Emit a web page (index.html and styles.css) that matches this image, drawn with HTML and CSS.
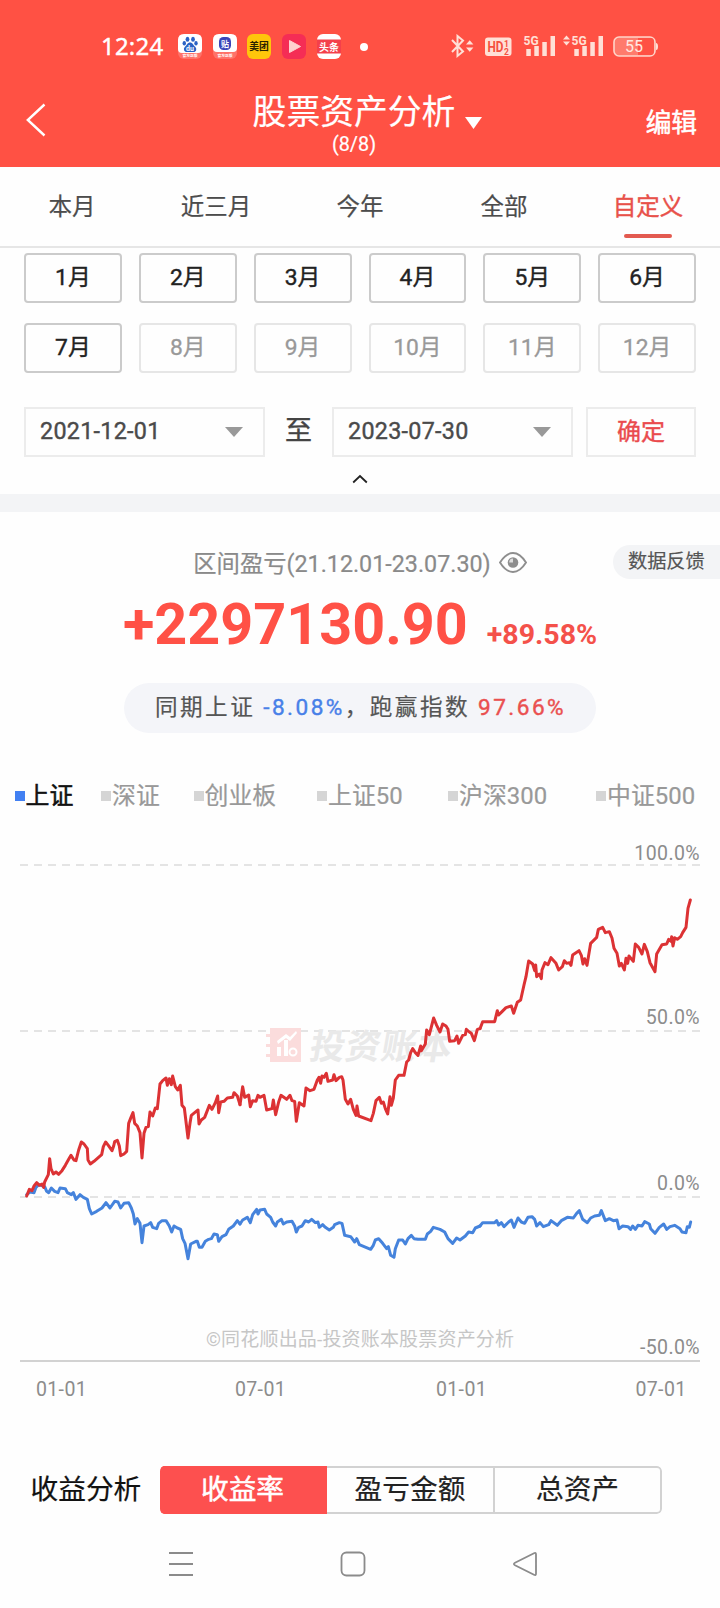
FILE: index.html
```html
<!DOCTYPE html>
<html lang="zh-CN">
<head>
<meta charset="utf-8">
<title>股票资产分析</title>
<link rel="stylesheet" href="styles.css">
</head>
<body>
<header class="top">
  <div class="status">
    <span class="clock">12:24</span>
    <div class="apps">
      <svg width="24" height="25" viewBox="0 0 24 25"><rect width="24" height="25" rx="6" fill="#ff7268"/><path d="M0 6Q0 0 6 0H18Q24 0 24 6V15Q24 19 20 19H4Q0 19 0 15Z" fill="#fff"/><g fill="#2b62c4"><ellipse cx="9.500" cy="5.300" rx="1.900" ry="2.500"/><ellipse cx="15" cy="5.300" rx="1.900" ry="2.500"/><ellipse cx="6.300" cy="9.300" rx="1.700" ry="2.200"/><ellipse cx="18" cy="9.300" rx="1.700" ry="2.200"/><path d="M12 8.500C9.500 8.500 9 11 7.200 12.500C4.500 15 6.500 18.500 9.500 18H15C18 18.500 19.500 15 17 12.500C15 11 14.700 8.500 12 8.500Z"/></g><text x="12" y="17" class="app-du">du</text><text x="12" y="23.300" class="app-cap">官方正版</text></svg>
      <svg width="24" height="25" viewBox="0 0 24 25"><rect width="24" height="25" rx="6" fill="#ff7268"/><path d="M0 6Q0 0 6 0H18Q24 0 24 6V14Q24 18 20 18H4Q0 18 0 14Z" fill="#fff"/><rect x="6" y="3" width="12" height="13" rx="4.500" fill="#3b45b8"/><text x="12" y="12.500" class="app-tie">贴</text><text x="12" y="23" class="app-cap">官方正版</text></svg>
      <svg width="24" height="25" viewBox="0 0 24 25"><rect width="24" height="25" rx="6" fill="#ffc60b"/><text x="12" y="16.300" class="app-mt">美团</text></svg>
      <svg width="24" height="25" viewBox="0 0 24 25"><rect width="24" height="25" rx="6" fill="#f52d55"/><path d="M7.500 6.500V18.500L18.500 12.500Z" fill="#ffd0d0" stroke="#ffd0d0" stroke-linejoin="round"/></svg>
      <svg width="24" height="25" viewBox="0 0 24 25"><rect width="24" height="25" rx="6" fill="#fff"/><rect y="5.500" width="24" height="14" fill="#f4404b"/><text x="12" y="16.500" class="app-tt">头条</text></svg>
    </div>
    <i class="more-dot"></i>
    <svg class="signals" width="210" height="26" viewBox="450 34 210 26">
      <g fill="none" stroke="#ffe0d6" stroke-width="2"><path d="M452 40L463 51.500L457.500 56V36L463 40.500L452 52"/></g>
      <g fill="#ffe0d6"><path d="M466 44.500L469.700 40.300L473.400 44.500ZM466 47.500L469.700 51.700L473.400 47.500Z"/><rect x="485" y="37.500" width="26.500" height="18.500" rx="3"/>
      <path d="M526.300 49h4.500v7h-4.500zM534.300 46h4.500v10h-4.500zM542.300 42h4.500v14h-4.500zM550.500 36h4.500v20h-4.500zM574.300 49h4.500v7h-4.500zM582.300 46h4.500v10h-4.500zM590.300 42h4.500v14h-4.500zM598.500 36h4.500v20h-4.500z"/>
      <path d="M563 39.500L566.500 35.500L570 39.500ZM563 41.500L566.500 45.500L570 41.500Z"/><path d="M656 43q2 0 2 3.500t-2 3.500z"/></g>
      <text x="487.500" y="52" class="hd" textLength="16" lengthAdjust="spacingAndGlyphs">HD</text><text x="504" y="46.500" class="hd-n">1</text><text x="504" y="54.500" class="hd-n">2</text>
      <text x="523.500" y="45" class="five-g">5G</text><text x="571.500" y="45" class="five-g">5G</text>
      <rect x="614" y="37" width="41" height="19" rx="5" fill="#ff7b6c" stroke="#ffd5c9" stroke-width="1.600"/><path d="M638 38h13q3 0 3 4v9q0 4-3 4h-13z" fill="#ff5144"/>
      <text x="634" y="52" class="battery">55</text>
    </svg>
  </div>
  <div class="titlebar">
    <svg class="back" width="22" height="34" viewBox="0 0 22 34"><path d="M18.500 1.500L1.800 17L18.500 32.500" fill="none" stroke="#fff" stroke-width="2.400"/></svg>
    <div class="heading">
      <h1>股票资产分析<svg class="caret" width="17" height="12" viewBox="0 0 17 12"><path d="M0 0H17L8.500 12Z" fill="#fff"/></svg></h1>
      <p>(8/8)</p>
    </div>
    <span class="edit">编辑</span>
  </div>
</header>

<nav class="tabs"><span>本月</span><span>近三月</span><span>今年</span><span>全部</span><span class="active">自定义</span></nav>

<section class="filter">
  <div class="months">
    <span>1月</span><span>2月</span><span>3月</span><span>4月</span><span>5月</span><span>6月</span>
    <span>7月</span><span class="off">8月</span><span class="off">9月</span><span class="off">10月</span><span class="off">11月</span><span class="off">12月</span>
  </div>
  <div class="range">
    <div class="date">2021-12-01<i></i></div>
    <span class="to">至</span>
    <div class="date">2023-07-30<i></i></div>
    <span class="ok">确定</span>
  </div>
  <svg class="fold" width="16" height="10" viewBox="0 0 16 10"><path d="M1.200 8.500L8 2L14.800 8.500" fill="none" stroke="#222" stroke-width="1.800"/></svg>
</section>

<section class="summary">
  <span class="feedback">数据反馈</span>
  <div class="period">区间盈亏(21.12.01-23.07.30)
    <svg width="28" height="21" viewBox="0 0 28 21"><path d="M1 10.500Q7 1 14 1T27 10.500Q21 20 14 20T1 10.500Z" fill="none" stroke="#8e8e8e" stroke-width="1.900"/><circle cx="14" cy="10.500" r="5.300" fill="#8e8e8e"/><path d="M14 10.500V6.500A4 4 0 0 0 10.200 10.500Z" fill="#ddd"/></svg>
  </div>
  <div class="profit"><b>+2297130.90</b><strong>+89.58%</strong></div>
  <div class="compare"><span>同期上证 <em class="down">-8.08%</em>，跑赢指数 <em class="up">97.66%</em></span></div>
</section>

<section class="chart-area">
  <div class="legend"><span class="on">上证</span><span>深证</span><span>创业板</span><span>上证50</span><span>沪深300</span><span>中证500</span></div>
  <svg class="chart" width="720" height="590" viewBox="0 830 720 590">
    <g stroke="#e4e4e4" stroke-width="2" stroke-dasharray="8 6"><path d="M20 865H700M20 1031H700M20 1197H700"/></g>
    <path d="M20 1361H700" stroke="#d2d2d2" stroke-width="2"/>
    <g fill="#fbdcdc"><path d="M270 1028H301V1062H270V1057H266V1054H270V1047H266V1044H270V1037H266V1034H270Z"/></g>
    <g fill="#fff"><path d="M277 1047h4v9h-4zM284 1040h4v16h-4zM277 1041L286 1034L290 1037L296 1031L297 1033L290 1041L286 1038L278 1044Z"/></g><circle cx="293" cy="1052" r="3.500" fill="none" stroke="#fff" stroke-width="2"/>
    <text x="308" y="1059.500" class="watermark" textLength="142" transform="translate(187 0) skewX(-10)">投资账本</text>
    <g transform="translate(0 980) scale(.33333)" class="line blue">
      <polyline points="80,644 90,636 102,638 108,622 116,614 134,620 140,634 146,638 154,624 164,634 174,638 180,624 196,626 202,638 214,644 220,638 228,658 240,644 250,652 262,658 268,686 275,702 290,694 306,684 318,668 330,684 344,664 354,666 362,684 372,670 386,668 394,684 400,702 405,732 412,716 420,730 426,788 432,738 444,734 452,728 458,742 470,746 476,730 486,722 498,722 508,738 515,756 522,738 532,744 542,748 548,776 555,790 564,836 572,792 588,784 592,784 598,802 606,802 616,784 626,778 634,776 642,762 652,764 656,784 666,770 678,764 686,748 700,738 712,722 720,732"/>
      <polyline transform="translate(720 0)" points="0,732 8,720 22,712 31,728 38,704 50,688 54,702 60,690 74,688 80,702 92,712 98,726 107,738 112,726 124,718 130,732 140,726 156,724 164,738 169,756 176,742 186,738 196,722 206,726 215,718 226,728 234,726 238,742 248,734 256,742 268,750 280,742 284,734 298,728 306,730 314,766 332,770 344,786 350,776 358,794 392,808 400,796 406,780 416,776 428,790 440,806 445,800 452,826 462,832 466,806 476,780 488,780 496,792 504,776 514,766 522,776 534,778 556,778 562,762 572,754 580,742 600,748 614,756 624,776 638,790 650,774 660,780 676,768 686,756 698,758 706,744 720,738"/>
      <polyline transform="translate(1440 -420)" points="0,1158 8,1148 44,1148 50,1142 56,1155 64,1148 72,1160 86,1146 94,1140 102,1162 114,1134 124,1146 134,1150 144,1132 156,1130 164,1138 170,1158 180,1148 190,1160 206,1154 213,1142 232,1156 244,1142 262,1132 280,1134 290,1120 298,1112 308,1138 322,1148 332,1134 344,1128 358,1126 364,1112 376,1142 388,1136 400,1142 411,1140 417,1166 428,1158 444,1160 452,1168 458,1158 466,1168 474,1156 486,1158 494,1145 508,1152 512,1166 525,1180 538,1162 551,1152 560,1168 570,1160 584,1156 600,1166 606,1176 618,1178 622,1160 628,1162 632,1146"/>
    </g>
    <g transform="translate(0 980) scale(.33333)" class="line red">
      <polyline points="80,648 88,628 96,632 102,618 110,608 118,616 126,612 131,622 134,606 145,584 149,536 153,566 160,582 168,576 176,583 186,572 196,556 206,538 213,526 222,540 228,542 236,510 244,486 252,492 262,506 264,540 271,552 282,544 305,524 310,500 317,486 325,496 336,512 341,498 344,485 352,481 358,498 362,527 372,522 380,514 386,430 393,412 399,398 404,430 412,438 420,458 426,534 432,460 438,442 445,440 450,396 458,408 466,384 472,386 480,312 488,302 498,294 502,316 508,296 514,314 518,288 526,320 533,330 541,316 546,376 553,384 564,474 570,430 574,406 584,398 594,390 597,432 604,420 614,412 628,376 636,388 646,368 653,348 656,398 662,366 672,364 682,354 698,352 702,338 712,348 720,374"/>
      <polyline transform="translate(720 0)" points="0,374 8,320 14,352 26,345 31,380 38,362 48,364 54,346 60,352 72,346 80,390 96,386 100,360 107,404 116,366 123,346 140,358 150,346 156,362 164,364 169,424 178,368 192,378 198,324 210,332 222,328 232,300 237,292 242,310 246,288 252,292 259,280 264,304 278,300 282,284 288,302 298,292 305,290 309,300 316,358 324,372 332,358 340,388 348,406 351,378 356,408 393,422 400,400 408,362 418,352 424,370 430,366 436,386 443,402 450,350 454,376 460,354 466,300 476,286 492,286 500,246 506,240 512,218 518,206 526,218 534,226 542,198 544,212 556,192 560,150 568,164 581,114 590,136 600,156 608,132 618,138 624,148 629,184 644,182 651,168 656,190 668,166 676,164 679,148 688,156 694,160 703,182 712,148 720,146"/>
      <polyline transform="translate(1440 -420)" points="0,566 8,545 44,545 52,512 56,525 66,515 78,503 94,498 101,520 112,487 122,480 132,435 138,410 146,363 158,372 164,392 167,375 170,410 178,402 184,416 186,390 195,368 204,374 213,353 228,370 236,390 247,380 253,362 260,370 268,368 273,376 278,345 288,338 297,332 304,346 309,372 314,356 321,376 332,310 350,292 355,268 368,262 376,278 388,275 396,294 402,325 411,340 418,378 424,370 433,390 438,355 443,370 447,348 460,364 466,312 476,322 486,342 493,313 502,335 510,368 525,395 530,342 546,314 560,312 566,298 573,304 575,290 579,318 584,293 592,298 602,290 608,278 618,262 624,205 631,180"/>
    </g>
    <g class="axis" text-anchor="end"><text x="700" y="859.500">100.0%</text><text x="700" y="1023.500">50.0%</text><text x="700" y="1189.500">0.0%</text><text x="700" y="1353.500">-50.0%</text></g>
    <g class="axis" text-anchor="middle"><text x="61.500" y="1396">01-01</text><text x="260.500" y="1396">07-01</text><text x="461.500" y="1396">01-01</text><text x="661" y="1396">07-01</text></g>
    <text x="360" y="1346" class="credit" textLength="308">©同花顺出品-投资账本股票资产分析</text>
  </svg>
</section>

<section class="analysis">
  <h2>收益分析</h2>
  <div class="segment"><span class="chosen">收益率</span><span>盈亏金额</span><span>总资产</span></div>
</section>

<footer class="sysnav">
  <svg width="26" height="26" viewBox="0 0 26 26"><path d="M1 2H25M1 13H25M1 24H25"/></svg>
  <svg width="26" height="26" viewBox="0 0 26 26"><rect x="1.500" y="1.500" width="23" height="23" rx="5"/></svg>
  <svg width="26" height="26" viewBox="0 0 26 26"><path d="M22 2.200Q24 1.200 24 3.500V22.500Q24 24.800 22 23.800L3 14.300Q.8 13 3 11.700Z"/></svg>
</footer>
</body>
</html>
```
FILE: styles.css
```css
* { box-sizing: border-box; margin: 0; padding: 0; }
body { width: 720px; height: 1608px; overflow: hidden; background: #fefefe; color: #222; font-family: Roboto, "Noto Sans CJK SC", sans-serif; -webkit-text-stroke: .2px; }
em, i { font-style: normal; }
svg { display: block; flex: none; }
svg text { -webkit-text-stroke: 0; }

.top { height: 167px; background: #ff5144; color: #fff; }
.status { display: flex; align-items: center; height: 93px; padding-left: 101px; }
.clock { width: 77px; margin-top: -1px; font: 400 24px/30px "Noto Sans", sans-serif; letter-spacing: .2px; white-space: nowrap; -webkit-text-stroke: .4px; }
.apps { display: flex; gap: 10.700px; }
.more-dot { width: 8px; height: 8px; margin: 0 82px 0 19px; border-radius: 50%; background: #fff; }
.app-du, .app-cap, .app-tie, .app-mt, .app-tt, .battery { text-anchor: middle; }
.app-du { font: 700 7px Roboto; fill: #fff; }
.app-cap { font: 700 3.800px "Noto Sans CJK SC"; fill: #fff; }
.app-tie { font: 700 8px "Noto Sans CJK SC"; fill: #fff; }
.app-mt { font: 700 9.800px "Noto Sans CJK SC"; fill: #2b2200; }
.app-tt { font: 700 10px "Noto Sans CJK SC"; fill: #fff; }
.hd { font: 700 14px Roboto; fill: #f5503f; }
.hd-n { font: 700 8.500px Roboto; fill: #f5503f; }
.five-g { font: 700 12px Roboto; fill: #ffe0d6; }
.battery { font: 400 16px Roboto; fill: #ffe9e0; }

.titlebar { display: grid; grid-template-columns: 150px 408px 1fr; height: 74px; }
.back { margin: 10px 0 0 26px; }
.heading { padding-top: 1px; text-align: center; }
.heading h1 { position: relative; width: max-content; margin: 0 auto; font-size: 33.800px; font-weight: 400; line-height: 38px; }
.heading p { font-size: 19.800px; line-height: 25px; }
.caret { position: absolute; right: -27px; bottom: 3px; }
.edit { justify-self: end; margin: 12px 23px 0 0; font-size: 25.700px; line-height: 36px; -webkit-text-stroke: .5px; }

.tabs { display: grid; grid-template-columns: repeat(5, 1fr); height: 81px; border-bottom: 2px solid #e6e6e6; text-align: center; font-size: 23.500px; line-height: 80px; color: #4c4c4c; }
.tabs .active { display: flex; flex-direction: column; align-items: center; color: #e8514a; -webkit-text-stroke: .4px; }
.tabs .active::after { content: ""; width: 48px; height: 4px; margin-top: -13px; border-radius: 2px; background: #e35a50; }

.filter { height: 264px; padding: 5px 24px 0; border-bottom: 18px solid #f3f4f6; }
.months { display: grid; grid-template-columns: repeat(6, 1fr); gap: 20px 17px; }
.months span { height: 50px; border: 2px solid #cbcbcb; border-radius: 4px; text-align: center; font-size: 22.800px; line-height: 45px; color: #222; -webkit-text-stroke: .4px; }
.months .off { border-color: #e6e6e6; color: #999; -webkit-text-stroke: .3px; }
.range { display: flex; align-items: center; height: 50px; margin-top: 34px; }
.date { display: flex; align-items: center; justify-content: space-between; width: 241px; height: 50px; padding: 0 20px 3px 14px; border: 2px solid #ececec; font-size: 23.300px; letter-spacing: .3px; color: #4a4a4a; -webkit-text-stroke: .4px; }
.date i { margin-top: 3px; border: 9.500px solid transparent; border-top: 10px solid #999; border-bottom: 0; }
.to { width: 67px; text-align: center; font-size: 27px; line-height: 46px; padding-bottom: 2px; color: #444; -webkit-text-stroke: .4px; }
.ok { width: 110px; height: 50px; margin-left: 13px; border: 2px solid #ececec; text-align: center; font-size: 24px; line-height: 46px; color: #ea4a4d; -webkit-text-stroke: .4px; }
.fold { margin: 17px auto 0; }

.summary { position: relative; display: flex; flex-direction: column; align-items: center; height: 222px; }
.feedback { position: absolute; right: 0; top: 33px; width: 107px; height: 34px; padding-left: 15px; border-radius: 17px 0 0 17px; background: #f3f4f6; font-size: 19.200px; line-height: 33px; color: #555; }
.period { display: flex; align-items: center; gap: 8px; height: 34px; margin-top: 33px; font-size: 23.300px; color: #8a8a8a; white-space: nowrap; }
.profit { display: flex; align-items: baseline; gap: 19px; height: 70px; margin-top: 11px; line-height: 70px; color: #ff5146; -webkit-text-stroke: 0; }
.profit b { font-size: 57.500px; font-weight: 700; }
.profit strong { font-size: 28.500px; font-weight: 700; color: #f4514a; }
.compare { width: 472px; height: 50px; margin-top: 23px; padding-left: 31px; border-radius: 25px; background: #f4f5f9; font-size: 22.600px; line-height: 49px; letter-spacing: 2.450px; white-space: nowrap; color: #555; }
.compare em { -webkit-text-stroke: .4px; }
.compare .down { color: #4880e8; }
.compare .up { color: #ea5050; }

.chart-area { height: 686px; }
.legend { display: grid; grid-template-columns: 86.500px 92.500px 123.500px 131px 148px 1fr; align-items: end; height: 90px; padding: 0 0 11px 14.500px; font-size: 23.900px; line-height: 34px; color: #999; white-space: nowrap; }
.legend span { display: flex; align-items: center; gap: 1px; height: 34px; }
.legend span::before { content: ""; width: 10px; height: 10px; background: #d5d5d5; }
.legend .on { color: #111; -webkit-text-stroke: .5px; }
.legend .on::before { background: #4280f2; }
.chart { margin-top: 6px; }
.line { fill: none; stroke-width: 9; stroke-linejoin: round; stroke-linecap: round; }
.blue { stroke: #4583dc; }
.red { stroke: #dc3234; }
.chart .axis text { font-size: 19.500px; fill: #8c8c8c; letter-spacing: .4px; -webkit-text-stroke: .35px #8c8c8c; }
.credit { font-size: 19px; fill: #c6c6c6; text-anchor: middle; }
.watermark { font: 700 35px "Noto Sans CJK SC"; fill: #e9e9e9; }

.analysis { display: flex; height: 48px; margin-top: 46px; padding-left: 30.500px; }
.analysis h2 { width: 129.500px; font-size: 27.700px; line-height: 47px; font-weight: 400; color: #111; }
.segment { display: grid; grid-template-columns: 167px 168px 1fr; width: 502px; overflow: hidden; border-radius: 5px; text-align: center; font-size: 27.700px; line-height: 44px; }
.segment span { border: solid #d2d2d2; border-width: 2px 2px 2px 0; }
.segment span:last-child { border-radius: 0 5px 5px 0; }
.segment .chosen { border-color: #fd504f; background: #fd504f; color: #fff; -webkit-text-stroke: .5px; }

.sysnav { display: flex; gap: 146px; padding: 37px 0 0 168px; }
.sysnav svg { fill: none; stroke: #8b8b8b; stroke-width: 1.800; }
```
